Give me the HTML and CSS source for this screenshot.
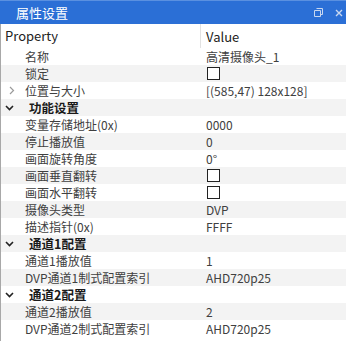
FILE: index.html
```html
<!DOCTYPE html>
<html lang="zh-CN">
<head>
    <meta charset="UTF-8">
    <meta name="viewport" content="width=device-width, initial-scale=1.0">
    <title>属性设置</title>
    <link rel="stylesheet" href="styles.css">
</head>
<body>
    <div class="panel">
        <div class="title-bar">
            <span class="title">属性设置</span>
            <span class="title-icons">
                <svg width="9" height="9" viewBox="0 0 9 9"><path d="M2.5 0.5h6v6h-2M0.5 2.5h6v6h-6z" fill="none" stroke="#c9d8f0" stroke-width="1"/></svg>
                <svg width="8" height="8" viewBox="0 0 8 8"><path d="M1 1L7 7M7 1L1 7" stroke="#c9d8f0" stroke-width="1.4"/></svg>
            </span>
        </div>
        <div class="grid">
            <div class="header">
                <div class="name-col">Property</div>
                <div class="value-col">Value</div>
            </div>
            <div class="row"><div class="name-col">名称</div><div class="value-col">高清摄像头_1</div></div>
            <div class="row"><div class="name-col">锁定</div><div class="value-col"><span class="check"></span></div></div>
            <div class="row"><div class="name-col"><span class="expand"><svg width="6" height="9" viewBox="0 0 6 9"><path d="M1 1l3.5 3.5L1 8" fill="none" stroke="#9a9a9a" stroke-width="1.2"/></svg></span>位置与大小</div><div class="value-col">[(585,47) 128x128]</div></div>
            <div class="row category"><div class="name-col"><span class="chevron"><svg width="9" height="6" viewBox="0 0 9 6"><path d="M1 1l3.5 3.5L8 1" fill="none" stroke="#222" stroke-width="1.6"/></svg></span>功能设置</div><div class="value-col"></div></div>
            <div class="row"><div class="name-col">变量存储地址(0x)</div><div class="value-col">0000</div></div>
            <div class="row"><div class="name-col">停止播放值</div><div class="value-col">0</div></div>
            <div class="row"><div class="name-col">画面旋转角度</div><div class="value-col">0°</div></div>
            <div class="row"><div class="name-col">画面垂直翻转</div><div class="value-col"><span class="check"></span></div></div>
            <div class="row"><div class="name-col">画面水平翻转</div><div class="value-col"><span class="check"></span></div></div>
            <div class="row"><div class="name-col">摄像头类型</div><div class="value-col">DVP</div></div>
            <div class="row"><div class="name-col">描述指针(0x)</div><div class="value-col">FFFF</div></div>
            <div class="row category"><div class="name-col"><span class="chevron"><svg width="9" height="6" viewBox="0 0 9 6"><path d="M1 1l3.5 3.5L8 1" fill="none" stroke="#222" stroke-width="1.6"/></svg></span>通道1配置</div><div class="value-col"></div></div>
            <div class="row"><div class="name-col">通道1播放值</div><div class="value-col">1</div></div>
            <div class="row"><div class="name-col">DVP通道1制式配置索引</div><div class="value-col">AHD720p25</div></div>
            <div class="row category"><div class="name-col"><span class="chevron"><svg width="9" height="6" viewBox="0 0 9 6"><path d="M1 1l3.5 3.5L8 1" fill="none" stroke="#222" stroke-width="1.6"/></svg></span>通道2配置</div><div class="value-col"></div></div>
            <div class="row"><div class="name-col">通道2播放值</div><div class="value-col">2</div></div>
            <div class="row"><div class="name-col">DVP通道2制式配置索引</div><div class="value-col">AHD720p25</div></div>
        </div>
    </div>
</body>
</html>
```

FILE: styles.css
```css
body {
    margin: 0;
    padding: 0;
    background: #ffffff;
    font-family: "Noto Sans CJK SC", "Noto Sans", sans-serif;
    color: #333333;
}
.panel {
    width: 346px;
    height: 341px;
    overflow: hidden;
}
.title-bar {
    height: 24px;
    background: #2b6fd6;
    border-top: 1px solid #5a90e0;
    box-sizing: border-box;
    display: flex;
    align-items: center;
    justify-content: space-between;
    padding: 0 3px 0 16px;
}
.title {
    color: #ffffff;
    font-size: 13px;
    line-height: 22px;
}
.title-icons {
    display: flex;
    align-items: center;
    gap: 12px;
}
.grid {
    border-left: 1px solid #a8a8a8;
    height: 317px;
}
.header {
    display: flex;
    height: 24px;
    align-items: center;
    font-size: 13px;
    color: #222;
}
.header .name-col {
    padding-left: 4px;
    border-right: 1px solid #e2e2e2;
    height: 24px;
    line-height: 24px;
}
.header .value-col {
    padding-left: 5px;
}
.name-col {
    width: 200px;
    box-sizing: border-box;
    flex-shrink: 0;
    display: flex;
    align-items: center;
}
.value-col {
    flex: 1;
    padding-left: 5px;
    display: flex;
    align-items: center;
}
.row {
    display: flex;
    height: 17px;
    font-size: 12px;
    line-height: 17px;
    color: #404040;
}
.row .name-col {
    padding-left: 24px;
}
.row:nth-child(odd) {
    background: #f3f3f3;
}
.category .name-col {
    padding-left: 3px;
    font-weight: bold;
    color: #1a1a1a;
    font-size: 12.5px;
}
.chevron {
    width: 24px;
    display: flex;
    align-items: center;
    padding-left: 1px;
}
.expand {
    margin-left: -16px;
    width: 16px;
    display: flex;
    align-items: center;
}
.check {
    width: 11px;
    height: 11px;
    border: 1px solid #222;
    background: #fff;
    display: inline-block;
    margin-left: 1px;
}
```
